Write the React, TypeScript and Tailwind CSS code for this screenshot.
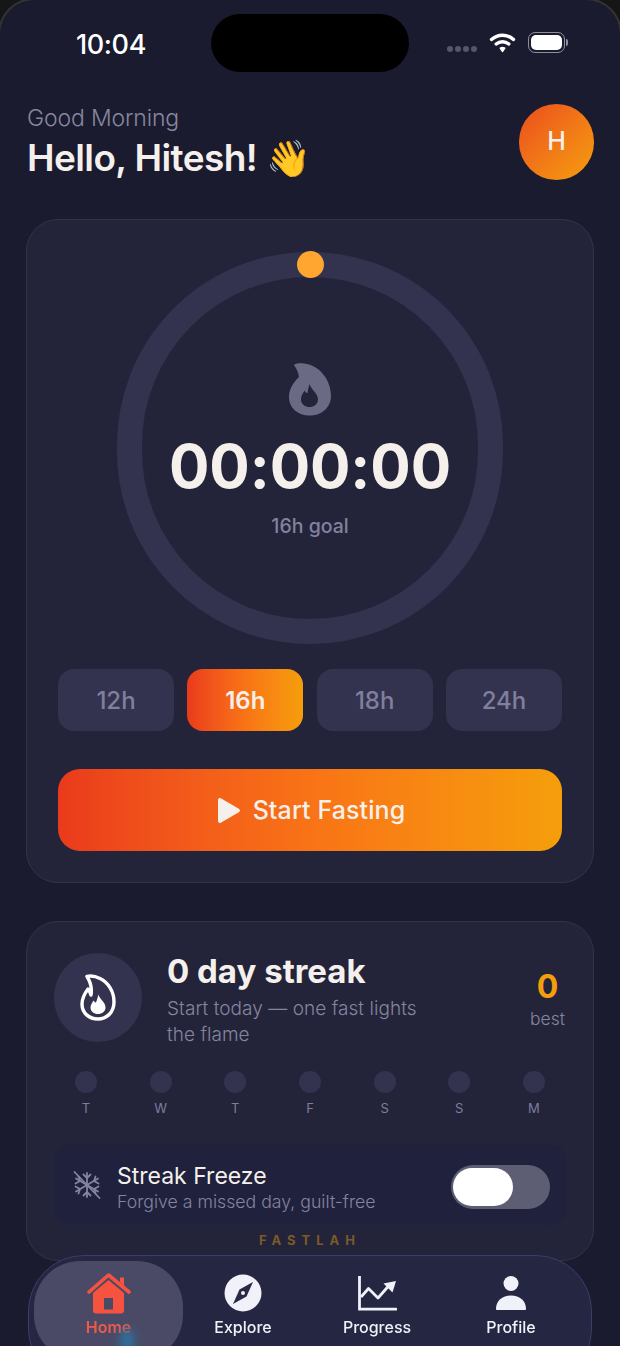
const FONT = "font-['Inter','Noto_Sans',sans-serif]";

const days = ["T", "W", "T", "F", "S", "S", "M"];
const durations = ["12h", "16h", "18h", "24h"];

const Wifi = () => (
  <svg width="27" height="21" viewBox="0 0 27 21" fill="none" stroke="#fff" strokeWidth="3.4" strokeLinecap="round">
    <path d="M2.5 7.5C9 1.8 18 1.8 24.5 7.5" />
    <path d="M7.2 12C10.9 8.9 16.1 8.9 19.8 12" />
    <path d="M13.5 19.5L11.2 16.2C12.6 15.3 14.4 15.3 15.8 16.2Z" fill="#fff" strokeWidth="1.4" strokeLinejoin="round" />
  </svg>
);

const Battery = () => (
  <div className="flex items-center gap-[1px]">
    <div className="h-[21px] w-[37px] rounded-[7px] border border-[#8f8f9c] p-[2px]">
      <div className="h-full w-full rounded-[5px] bg-white" />
    </div>
    <div className="h-[7px] w-[2px] rounded-r-full bg-[#8f8f9c]" />
  </div>
);

const FlameSolid = () => (
  <svg width="42" height="53" viewBox="0 0 42 53" className="block">
    <path
      fillRule="evenodd"
      fill="#6b6a84"
      d="M5 2C7-.5 14 0 20 1.500C32 5 42 18 42 33C42 44 33 52.500 21 52.500C9 52.500 0 45 0 34C0 27 3 21 10 14C9.500 9 7 5 5 2ZM20.500 21C21.500 26 29 30 29 36.500C29 41.500 24.500 44 20.500 44C16.500 44 12 41.500 12 36.500C12 32 14.500 30 15.500 27.500C16.500 29.500 17.500 30 18.500 30C19 27 19.500 24.500 20.500 21Z"
    />
  </svg>
);

const FlameOutline = () => (
  <svg width="36" height="47" viewBox="0 0 36 47" fill="none" className="block">
    <path
      d="M7 2.500C11 1.500 16 2.500 20 4.500C28 8.500 34 17 34 28C34 38 27 45 18 45C9 45 2 39 2 30C2 23 5 19 8 15C10 17 10.500 19 11 21C12 15 10.500 8 7 2.500Z"
      stroke="#fff"
      strokeWidth="3.4"
      strokeLinejoin="round"
    />
    <path
      d="M18.500 20.500C19.500 25 25.500 28 25.500 33.500C25.500 37.500 22 40 18 40C14 40 10.500 37.500 10.500 33.500C10.500 30.500 12.500 28.500 13.500 26.500C14.500 28 15.500 28.500 16 28.500C17 26 17.500 23.500 18.500 20.500Z"
      fill="#fff"
    />
  </svg>
);

const FreezeIcon = () => (
  <svg width="28" height="30" viewBox="0 0 28 30" fill="none" stroke="#85859f" strokeWidth="1.8" strokeLinecap="round" strokeLinejoin="round" className="block shrink-0">
    <path d="M1.500 2L26.500 28" />
    <path d="M14 3V27" />
    <path d="M10.500 4.500L14 8L17.500 4.500" />
    <path d="M10.500 25.500L14 22L17.500 25.500" />
    <path d="M3 8.500L25 21.500" />
    <path d="M25 8.500L3 21.500" />
    <path d="M2.500 13.500L7 11L5.500 6.500" />
    <path d="M25.500 16.500L21 19L22.500 23.500" />
    <path d="M22.500 6.500L21 11L25.500 13.500" />
    <path d="M5.500 23.500L7 19L2.500 16.500" />
  </svg>
);

const HomeIcon = () => (
  <svg width="44" height="41" viewBox="0 0 44 41" fill="none" className="block">
    <path d="M2 19L21.500 2L42 19" stroke="#f5523f" strokeWidth="3.600" strokeLinecap="round" strokeLinejoin="round" />
    <path d="M33 9V4.500H37V13Z" fill="#f5523f" />
    <path
      fillRule="evenodd"
      fill="#f5523f"
      d="M21.500 7L37 20V37.500C37 39.400 35.800 40.500 34 40.500H9C7.200 40.500 6 39.400 6 37.500V20ZM17 25V36.500H26V25Z"
    />
  </svg>
);

const CompassIcon = () => (
  <svg width="38" height="38" viewBox="0 0 38 38" className="block">
    <circle cx="19" cy="19" r="18.500" fill="#f1f1fa" />
    <path d="M29 8L22.500 22.500L9 30L15.500 15.500Z" fill="#2a2a45" />
    <circle cx="19" cy="19" r="2" fill="#f1f1fa" />
  </svg>
);

const ProgressIcon = () => (
  <svg width="39" height="35" viewBox="0 0 39 35" fill="none" className="block">
    <path d="M1.500 0V33.200H38" stroke="#f1f1fa" strokeWidth="2.800" strokeLinecap="round" />
    <path d="M3 21L10.500 12.500L20 22L31 9.500" stroke="#f1f1fa" strokeWidth="2.800" strokeLinejoin="round" />
    <path d="M38 5L25.500 7.500L34.500 16.500Z" fill="#f1f1fa" />
  </svg>
);

const ProfileIcon = () => (
  <svg width="30" height="34" viewBox="0 0 30 34" className="block">
    <circle cx="15" cy="7.500" r="7.500" fill="#f1f1fa" />
    <path d="M0 33C0 25 6 19.500 15 19.500C24 19.500 30 25 30 33C30 33.600 29.600 34 29 34H1C.4 34 0 33.600 0 33Z" fill="#f1f1fa" />
  </svg>
);

const navItems = [
  { label: "Explore", icon: <CompassIcon /> },
  { label: "Progress", icon: <ProgressIcon /> },
  { label: "Profile", icon: <ProfileIcon /> },
];

export default function App() {
  return (
    <div className={`relative h-[1346px] w-[620px] overflow-hidden bg-[#161616] ${FONT}`}>
      <div className="h-full rounded-t-[34px] bg-[#1a1b2f] shadow-[0_0_0_2px_#333333]">
        {/* status bar */}
        <div className="flex h-[104px] items-start">
          <div className="mt-[28px] w-[211px] pl-[76px] text-[27px] leading-[34px] font-medium tracking-[-0.4px] text-white">10:04</div>
          <div className="mt-[14px] h-[58px] w-[198px] rounded-full bg-black" />
          <div className="mt-[32px] ml-[38px] flex items-center">
            <div className="mt-[13px] mr-[12px] flex gap-[2px]">
              {[0, 1, 2, 3].map((i) => (
                <div key={i} className="h-[6px] w-[6px] rounded-full bg-[#55566a]" />
              ))}
            </div>
            <Wifi />
            <div className="ml-[12px]">
              <Battery />
            </div>
          </div>
        </div>

        {/* greeting */}
        <div className="flex items-start justify-between pr-[26px] pl-[27px]">
          <div>
            <div className="text-[23px] leading-[28px] font-light tracking-[-0.15px] text-[#87879f]">Good Morning</div>
            <div className="mt-[5px] text-[37px] leading-[42px] font-semibold tracking-[-0.6px] whitespace-nowrap text-[#f5f0eb]">
              Hello, Hitesh! <span className="text-[36px]">👋</span>
            </div>
          </div>
          <div className="flex h-[76px] w-[75px] items-center justify-center rounded-full bg-gradient-to-br from-[#ea4a1c] to-[#f59e0b] text-[25px] font-medium text-[#f5f0eb]">
            H
          </div>
        </div>

        {/* timer card */}
        <div className="mx-[26px] mt-[39px] rounded-[32px] border border-[#33344a] bg-[#23243a] px-[31px] pt-[32px] pb-[31px]">
          <div className="relative mx-auto h-[392px] w-[386px] rounded-full border-[25px] border-[#33334f]">
            <div className="absolute top-[-26px] left-[155px] h-[27px] w-[27px] rounded-full bg-[#ffa630]" />
            <div className="flex flex-col items-center pt-[86px]">
              <FlameSolid />
              <div className="mt-[15px] text-[60px] leading-[70px] font-bold tracking-[-0.1px] text-[#f5f0eb]">00:00:00</div>
              <div className="mt-[13px] text-[19.500px] leading-[24px] font-medium text-[#82829f]">16h goal</div>
            </div>
          </div>

          <div className="mt-[25px] flex justify-between">
            {durations.map((d) =>
              d === "16h" ? (
                <div
                  key={d}
                  className="flex h-[62px] w-[116px] items-center justify-center rounded-[16px] bg-gradient-to-r from-[#ea3a1c] via-[#f97316] to-[#f59e0b] pt-[2px] text-[24px] font-semibold text-[#f5f0eb]"
                >
                  {d}
                </div>
              ) : (
                <div
                  key={d}
                  className="flex h-[62px] w-[116px] items-center justify-center rounded-[16px] bg-[#33334f] pt-[2px] text-[24px] font-medium text-[#7f7f9e]"
                >
                  {d}
                </div>
              )
            )}
          </div>

          <div className="mt-[38px] flex h-[82px] items-center justify-center gap-[13px] rounded-[22px] bg-gradient-to-r from-[#ea3a1c] via-[#f97316] to-[#f59e0b] pt-[1px] pl-[3px] text-[25px] font-medium tracking-[0.1px] text-[#f5f0eb]">
            <svg width="22" height="25" viewBox="0 0 22 25" className="block">
              <path d="M0 2C0 .5 1.500-.4 2.800.3L20.800 10.800C22.300 11.600 22.300 13.400 20.800 14.200L2.800 24.700C1.500 25.400 0 24.500 0 23Z" fill="#f5f0eb" />
            </svg>
            Start Fasting
          </div>
        </div>

        {/* streak card */}
        <div className="mx-[26px] mt-[38px] h-[340px] rounded-[32px] border border-[#33344a] bg-[#23243a] px-[27px] pt-[31px]">
          <div className="flex">
            <div className="flex h-[89px] w-[88px] shrink-0 items-center justify-center rounded-full bg-[#33334f]">
              <FlameOutline />
            </div>
            <div className="ml-[25px] w-[263px]">
              <div className="-mt-[2px] text-[33px] leading-[40px] font-bold text-[#f5f0eb]">0 day streak</div>
              <div className="mt-[5px] text-[19px] leading-[26px] font-light tracking-[0.05px] text-[#85859f]">
                Start today — one fast lights the flame
              </div>
            </div>
            <div className="mr-[1px] ml-auto flex flex-col items-center pt-[15px]">
              <div className="text-[32px] leading-[38px] font-bold text-[#f59e0b]">0</div>
              <div className="mt-[1px] text-[17.500px] leading-[24px] font-light text-[#85859f]">best</div>
            </div>
          </div>

          <div className="mt-[23px] flex justify-between px-[21px]">
            {days.map((d, i) => (
              <div key={i} className="flex w-[22px] flex-col items-center">
                <div className="h-[22px] w-[22px] rounded-full bg-[#33334f]" />
                <div className="mt-[7px] text-[13px] leading-[16px] text-[#7d7d9c]">{d}</div>
              </div>
            ))}
          </div>

          <div className="mt-[29px] flex h-[80px] items-center rounded-[16px] bg-[#20213c] pr-[16px] pl-[19px]">
            <FreezeIcon />
            <div className="ml-[16px] pt-[6px]">
              <div className="text-[23px] leading-[28px] text-[#f5f0eb]">Streak Freeze</div>
              <div className="text-[17.700px] leading-[24px] font-light text-[#85859f]">Forgive a missed day, guilt-free</div>
            </div>
            <div className="mt-[4px] ml-auto flex h-[44px] w-[99px] items-center rounded-full bg-[#5d5d73] pl-[2px]">
              <div className="h-[38px] w-[60px] rounded-full bg-white" />
            </div>
          </div>

          <div className="mt-[7px] text-center text-[13px] leading-[16px] font-bold tracking-[6px] text-[#7a5a2a]">FASTLAH</div>
        </div>
      </div>

      {/* bottom nav */}
      <div className="absolute top-[1255px] left-[28px] flex h-[130px] w-[564px] items-start rounded-[56px] border border-[#3c3e68] bg-[#272844e6] pt-[5px] pl-[5px] backdrop-blur-sm">
        <div className="relative flex h-[100px] w-[149px] shrink-0 flex-col items-center overflow-hidden rounded-[46px] bg-[#4a4a66] pt-[12px]">
          <HomeIcon />
          <div className="mt-[3px] text-[16px] leading-[20px] font-semibold text-[#ee5a4c]">Home</div>
          <div className="absolute top-[68px] left-[86px] h-[22px] w-[14px] rounded-full bg-[#2f6f9c] blur-[4px]" />
        </div>
        <div className="flex gap-[14px]">
          {navItems.map((item) => (
            <div key={item.label} className="flex w-[120px] flex-col items-center pt-[12px]">
              <div className="flex h-[40px] items-center">{item.icon}</div>
              <div className="mt-[4px] text-[16px] leading-[20px] font-medium text-[#f1f1fa]">{item.label}</div>
            </div>
          ))}
        </div>
      </div>
    </div>
  );
}
